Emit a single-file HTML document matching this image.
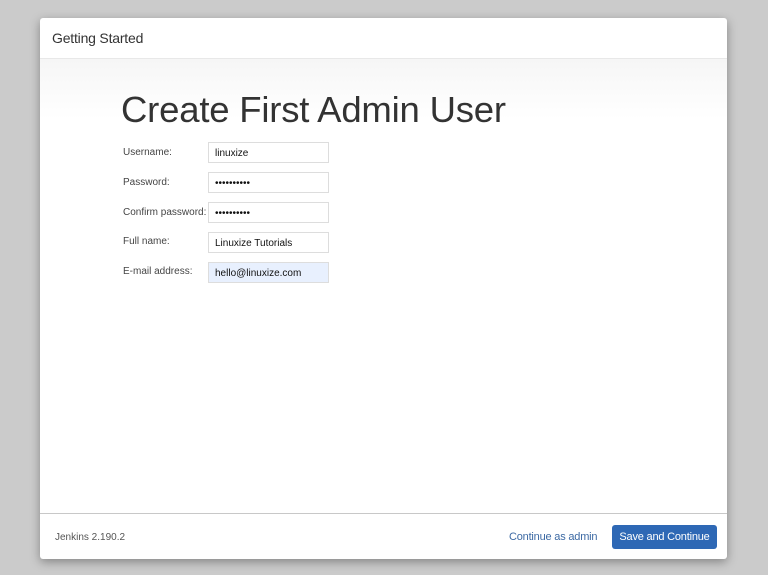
<!DOCTYPE html>
<html><head><style>
body{margin:0;width:768px;height:575px;background:#cbcbcb;font-family:"Liberation Sans",sans-serif;position:relative;overflow:hidden}
.dlg{position:absolute;left:40px;top:18px;width:687px;height:541px;background:#fff;border-radius:3px;box-shadow:0 3px 10px rgba(0,0,0,.35)}
.hd{height:40px;border-bottom:1px solid #e8e8e8;font-size:14px;color:#333;line-height:41px;padding-left:12px;letter-spacing:-0.2px}
.body{position:absolute;top:41px;left:0;right:0;height:454px;background:linear-gradient(#f6f6f6,#fff 60px)}
h1{position:absolute;left:81px;top:30px;margin:0;font-size:36.5px;font-weight:normal;color:#333;letter-spacing:-0.2px}
.lb{position:absolute;left:83px;font-size:10px;color:#444;white-space:nowrap}
.in{position:absolute;left:168px;width:121px;height:21px;border:1px solid #ddd;background:#fff;font-size:10px;line-height:21px;padding-left:6px;box-sizing:border-box;color:#111}
.ft{position:absolute;top:495px;left:0;right:0;height:46px;border-top:1px solid #c8c8c8}
.ver{position:absolute;left:15px;top:18px;font-size:10px;color:#555}
.lnk{position:absolute;left:469px;top:17px;font-size:11px;color:#3d6aa4;letter-spacing:-0.2px}
.btn{position:absolute;left:572px;top:11px;width:105px;height:24px;background:#2e68b5;border-radius:3px;color:#fff;font-size:11px;line-height:24px;text-align:center;letter-spacing:-0.2px}
</style></head><body>
<div class="dlg">
<div class="hd">Getting Started</div>
<div class="body">
<h1>Create First Admin User</h1>
<div class="lb" style="top:88px">Username:</div><div class="in" style="top:83px">linuxize</div>
<div class="lb" style="top:118px">Password:</div><div class="in" style="top:113px">••••••••••</div>
<div class="lb" style="top:148px">Confirm password:</div><div class="in" style="top:143px">••••••••••</div>
<div class="lb" style="top:177px">Full name:</div><div class="in" style="top:173px">Linuxize Tutorials</div>
<div class="lb" style="top:207px">E-mail address:</div><div class="in" style="top:203px;background:#e8f0fe">hello@linuxize.com</div>
</div>
<div class="ft"><div class="ver">Jenkins 2.190.2</div><div class="lnk">Continue as admin</div><div class="btn">Save and Continue</div></div>
</div>
</body></html>
